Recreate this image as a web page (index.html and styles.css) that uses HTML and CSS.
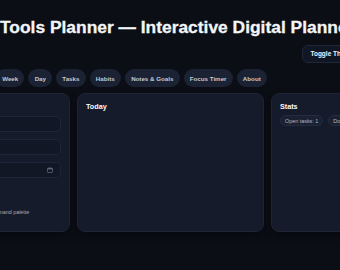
FILE: index.html
```html
<!DOCTYPE html>
<html lang="en">
<head>
<meta charset="utf-8">
<title>Tools Planner</title>
<link rel="stylesheet" href="styles.css">
</head>
<body>
<div class="page">
  <header class="top">
    <h1 class="title">Tools Planner — Interactive Digital Planner</h1>
    <div class="actions"><button class="btn">Toggle Theme</button></div>
  </header>
  <nav class="tabs">
    <span class="tab">Week</span>
    <span class="tab">Day</span>
    <span class="tab">Tasks</span>
    <span class="tab">Habits</span>
    <span class="tab">Notes &amp; Goals</span>
    <span class="tab">Focus Timer</span>
    <span class="tab">About</span>
  </nav>
  <main class="grid">
    <section class="card">
      <h2 class="card-title">Quick Add</h2>
      <div class="fields">
        <div class="field"><span class="ph">Task title</span></div>
        <div class="field"><span class="ph">Notes</span></div>
        <div class="field"><span class="ph">mm/dd/yyyy</span>
          <svg class="cal" width="6" height="6" viewBox="0 0 6 6"><rect x="0.5" y="1" width="5" height="4.5" rx="0.6" fill="none" stroke="#5b6577" stroke-width="0.8"/><rect x="0.5" y="1" width="5" height="1.4" fill="#5b6577"/></svg>
        </div>
      </div>
      <p class="hint">Tip: press Ctrl+K or Cmd+K to open the command palette</p>
    </section>
    <section class="card">
      <h2 class="card-title">Today</h2>
    </section>
    <section class="card">
      <h2 class="card-title">Stats</h2>
      <div class="chips">
        <span class="chip">Open tasks: 1</span>
        <span class="chip">Done today: 0</span>
      </div>
    </section>
  </main>
</div>
</body>
</html>
```
FILE: styles.css
```css
html, body {
  margin: 0;
  padding: 0;
  background: #0b0e15;
}
body {
  width: 340px;
  height: 270px;
  overflow: hidden;
  font-family: "Liberation Sans", Arial, sans-serif;
  color: #e5e7eb;
}
.page {
  width: 340px;
}
.top {
  padding-top: 18px;
}
.title {
  margin: 0;
  font-size: 17.4px;
  line-height: 19px;
  font-weight: 700;
  color: #f3f5f8;
  white-space: nowrap;
  -webkit-text-stroke: 0.3px #f3f5f8;
}
.actions {
  margin-top: 8px;
  display: flex;
  justify-content: flex-end;
}
.btn {
  flex-shrink: 0;
  margin-right: -22px;
  font-family: inherit;
  font-size: 6.5px;
  line-height: 8px;
  font-weight: 700;
  color: #f1f5f9;
  background: #111624;
  border: 1px solid #1f2737;
  border-radius: 6px;
  padding: 4px 7px;
}
.tabs {
  margin-top: 6px;
  margin-left: -4px;
  display: flex;
  gap: 4px;
  white-space: nowrap;
}
.tab {
  display: flex;
  align-items: center;
  height: 18px;
  padding: 0 6.2px;
  border-radius: 9px;
  background: #1a2233;
  color: #c2c9d6;
  font-size: 6.2px;
  font-weight: 700;
}
.grid {
  margin-top: 6px;
  margin-left: -117px;
  display: grid;
  grid-template-columns: repeat(3, 187px);
  gap: 7px;
  height: 139px;
}
.card {
  background: #151b2a;
  border: 1px solid #1d2435;
  border-radius: 8px;
  padding: 8px;
  box-shadow: 0 4px 8px rgba(0, 0, 0, 0.35);
}
.card-title {
  margin: 0;
  font-size: 7.2px;
  line-height: 9px;
  font-weight: 700;
  color: #f8fafc;
}
.fields {
  margin-top: 5px;
  display: flex;
  flex-direction: column;
  gap: 7px;
}
.field {
  height: 14px;
  border: 1px solid #1e2536;
  border-radius: 5px;
  background: #121726;
  display: flex;
  align-items: center;
  justify-content: space-between;
  padding: 0 5px;
}
.ph {
  font-size: 5.4px;
  color: #6b7486;
}
.cal {
  display: block;
  margin-right: 2px;
}
.hint {
  margin: 30px 0 0;
  font-size: 5.4px;
  line-height: 8px;
  color: #a3abb9;
  white-space: nowrap;
}
.chips {
  margin-top: 4px;
  display: flex;
  gap: 5px;
  white-space: nowrap;
}
.chip {
  display: flex;
  align-items: center;
  height: 9px;
  padding: 0 4px;
  border: 1px solid #232c40;
  border-radius: 6px;
  background: #1a2133;
  color: #aeb7c6;
  font-size: 5.4px;
}
```
